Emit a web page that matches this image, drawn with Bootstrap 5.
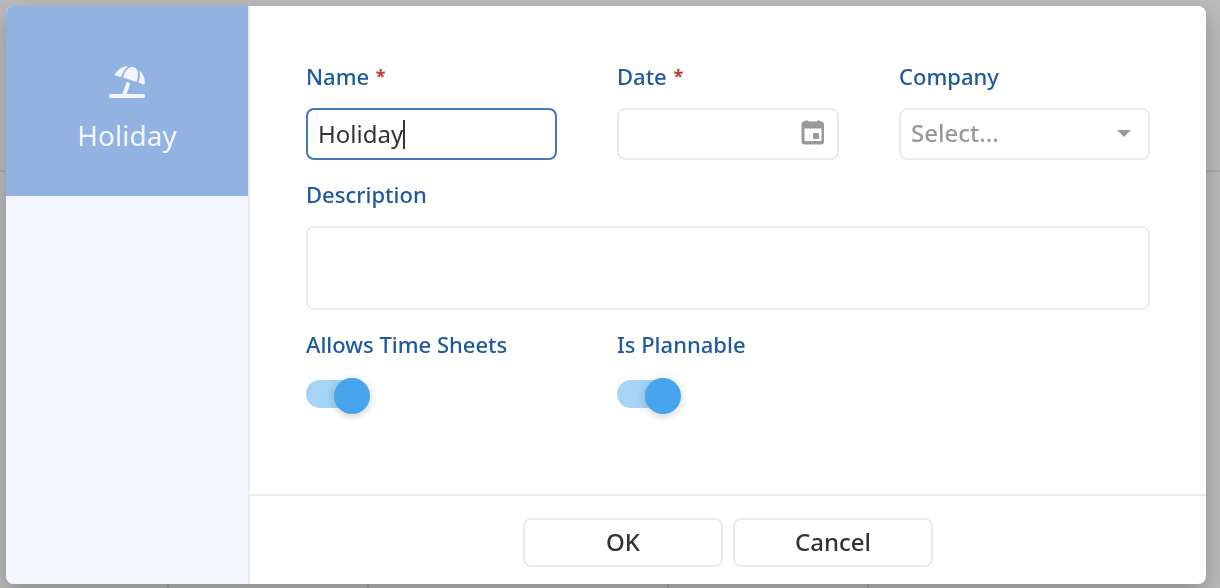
<!DOCTYPE html>
<html lang="en">
<head>
<meta charset="utf-8">
<meta name="viewport" content="width=device-width, initial-scale=1">
<title>Holiday</title>
<link href="https://cdn.jsdelivr.net/npm/bootstrap@5.3.0/dist/css/bootstrap.min.css" rel="stylesheet">
<style>
body { background: #bbb; color: #333; font-family: "Noto Sans", sans-serif; }
/* grid of the page behind the dialog */
.backdrop-grid { z-index: -1; }
.backdrop-head { height: 172px; border-bottom: 2px solid #a9a9a9; }
.backdrop-cell { width: 200px; border-right: 2px solid #a8a8a8; }
.backdrop-cell.first { width: 169px; }
.backdrop-cell.wide { width: 300px; }
.stage { padding: 6px 14px 4px 6px; }
.dialog { background: #fff; border-radius: 8px; box-shadow: 0 10px 24px rgba(0,0,0,.24); }
.side { width: 244px; background: #f3f6fe; border-right: 2px solid #ebebeb; }
.tile { height: 190px; background: #92b3e2; color: #f3f6fe; font-size: 28px; line-height: 36px; padding-top: 16px; gap: 18px; }
.tile:hover { color: #fff; }
.fields { padding: 56px; }
.field-row { display: grid; grid-template-columns: 251fr 222fr 251fr; column-gap: 60px; margin-bottom: 20px; }
.field-label { display: block; color: #205a9c; font-size: 22px; font-weight: 500; line-height: 28px; margin-bottom: 18px; }
.req { color: #c0392f; font-size: 18px; font-weight: 700; line-height: 1; margin-left: 1px; vertical-align: 2px; }
.box, .box.form-control, .box.form-select { height: 52px; border: 2px solid #ebebeb; border-radius: 8px; padding: 0 10px 2px; font-size: 24px; line-height: 32px; color: #333; background-color: #fff; }
.box:focus { border-color: #4479b8; box-shadow: none; }
.box.form-select { color: #999; font-weight: 500; background-image: url("data:image/svg+xml,%3csvg xmlns='http://www.w3.org/2000/svg' viewBox='0 0 14 8'%3e%3cpath fill='%23999' d='M0 0h14L7 7z'/%3e%3c/svg%3e"); background-size: 14px 8px; background-position: right 17px center; }
.box.area { height: 84px; resize: none; padding: 8px 10px; }
.box.typing { caret-color: transparent; }
/* text cursor, after an invisible copy of the typed text */
.cursor-line { left: 12px; top: 12px; height: 29px; font-size: 24px; line-height: 29px; color: transparent; border-right: 2px solid #333; pointer-events: none; }
.date-btn { right: 13px; top: 12px; line-height: 0; }
.toggle { appearance: none; display: block; position: relative; width: 64px; height: 36px; margin: 20px 0 0; cursor: pointer; }
.toggle::before { content: ""; position: absolute; left: 0; top: 2px; width: 60px; height: 28px; border-radius: 14px; background: #ccc; }
.toggle::after { content: ""; position: absolute; left: 0; top: 0; width: 36px; height: 36px; border-radius: 50%; background: #eee; box-shadow: 0 2px 8px rgba(0,0,0,.2); }
.toggle:checked::before { background: #a5d4f7; }
.toggle:checked::after { left: 28px; background: #47a5ee; }
.foot { border-top: 2px solid #ebebeb; padding: 22px 0 17px; gap: 10px; }
.act { width: 200px; height: 49px; border: 2px solid #ebebeb; border-radius: 8px; background: #fff; color: #333; font-size: 24px; font-weight: 500; line-height: 32px; padding: 0 0 2px; }
</style>
</head>
<body>
<div class="backdrop-grid position-fixed top-0 start-0 w-100 h-100 d-flex flex-column" aria-hidden="true">
  <div class="backdrop-head"></div>
  <div class="d-flex flex-grow-1">
    <div class="backdrop-cell first"></div>
    <div class="backdrop-cell"></div>
    <div class="backdrop-cell wide"></div>
    <div class="backdrop-cell"></div>
  </div>
</div>
<div class="stage d-flex min-vh-100">
  <div class="dialog d-flex flex-grow-1 overflow-hidden" role="dialog" aria-label="Holiday">
    <nav class="side flex-shrink-0">
      <a href="#" class="tile d-flex flex-column align-items-center justify-content-center text-decoration-none">
        <svg width="38" height="34" viewBox="0 0 38 34" fill="currentColor" aria-hidden="true">
          <path d="M7 9.500C10 4.500 14 1.300 20 1C17 3.500 14.500 7.500 13.200 12L7.300 10.500Q6.600 10.200 7 9.500Z"/>
          <path d="M15 12.500C16.500 7 19.500 2 24.500 2C30 2 31.200 9 28.800 17Z"/>
          <path d="M31.600 5.500C35.500 9 37.200 13.500 36.800 18.500Q36.700 19.600 35.800 19.400L30.600 17.600C31.800 13.500 32.300 9 31.600 5.500Z"/>
          <path d="M19 17.500L21.800 18.500L18 29H15Z" stroke="currentColor" stroke-width="1" stroke-linejoin="round"/>
          <rect x="1" y="29" width="36" height="4" rx="2"/>
        </svg>
        <span>Holiday</span>
      </a>
    </nav>
    <div class="d-flex flex-column flex-grow-1">
      <form class="fields flex-grow-1 pb-0" id="holiday-form">
        <div class="field-row">
          <div>
            <label class="field-label" for="name">Name <span class="req">*</span></label>
            <div class="position-relative">
              <input class="box typing form-control" id="name" type="text" value="Holiday" autofocus>
              <span class="cursor-line position-absolute" aria-hidden="true">Holiday</span>
            </div>
          </div>
          <div>
            <label class="field-label" for="date">Date <span class="req">*</span></label>
            <div class="position-relative">
              <input class="box form-control" id="date" type="text">
              <button type="button" class="date-btn btn border-0 p-0 position-absolute" aria-label="Pick a date">
                <svg width="26" height="26" viewBox="0 0 26 26" aria-hidden="true">
                  <path fill="#999" fill-rule="evenodd" d="M4.500 1.500V1.200Q4.500 .5 5.500 .5H7.500Q8.500 .5 8.500 1.500H17V1.200Q17 .5 18 .5H19.500Q20.500 .5 20.500 1.500H21Q24 1.500 24 4.500V21.500Q24 24.500 21 24.500H4.500Q1.500 24.500 1.500 21.500V4.500Q1.500 1.500 4.500 1.500ZM4.500 8.500V21H21.500V8.500ZM13 13H19V19H13Z"/>
                </svg>
              </button>
            </div>
          </div>
          <div>
            <label class="field-label" for="company">Company</label>
            <select class="box form-select" id="company"><option>Select...</option></select>
          </div>
        </div>
        <div class="mb-0">
          <label class="field-label" for="description">Description</label>
          <textarea class="box area form-control" id="description"></textarea>
        </div>
        <div class="field-row mt-3 pt-1">
          <div>
            <label class="field-label" for="sheets">Allows Time Sheets</label>
            <input class="toggle" id="sheets" type="checkbox" role="switch" checked>
          </div>
          <div>
            <label class="field-label" for="plannable">Is Plannable</label>
            <input class="toggle" id="plannable" type="checkbox" role="switch" checked>
          </div>
        </div>
      </form>
      <div class="foot d-flex justify-content-center">
        <button type="submit" form="holiday-form" class="act btn">OK</button>
        <button type="button" class="act btn">Cancel</button>
      </div>
    </div>
  </div>
</div>
<script src="https://cdn.jsdelivr.net/npm/bootstrap@5.3.0/dist/js/bootstrap.bundle.min.js"></script>
</body>
</html>
